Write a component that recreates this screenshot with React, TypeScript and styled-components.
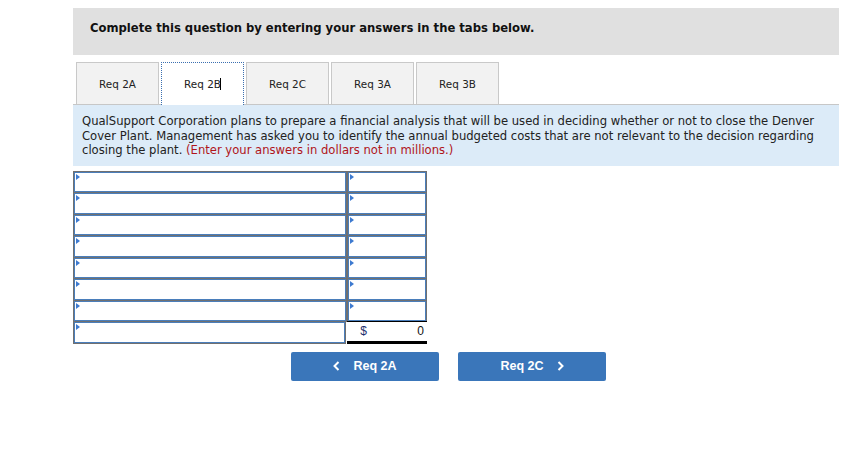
import styled, { createGlobalStyle } from 'styled-components';

const Global = createGlobalStyle`
  body {
    margin: 0;
    background: #ffffff;
    font-family: "DejaVu Sans", Verdana, sans-serif;
  }
`;

const Page = styled.div`
  width: 766px;
  padding: 8px 0 0 73px;
`;

const Banner = styled.div`
  background: #e0e0e0;
  height: 47px;
  display: flex;
  align-items: center;
  padding: 0 17px 8px;
  box-sizing: border-box;
  font-weight: bold;
  font-size: 11.6px;
  color: #111;
`;

const TabBar = styled.div`
  display: flex;
  gap: 2px;
  margin-top: 7px;
  padding-left: 3px;
  border-bottom: 1px solid #c7c7c7;
`;

const Tab = styled.div<{ active?: boolean }>`
  width: 83px;
  height: 42px;
  box-sizing: border-box;
  display: flex;
  align-items: center;
  justify-content: center;
  font-size: 10.4px;
  color: #222;
  background: ${(p) => (p.active ? '#ffffff' : '#f2f2f2')};
  border: ${(p) => (p.active ? '1px dotted #3a6fb0' : '1px solid #c9c9c9')};
  border-bottom: none;
  margin-bottom: -1px;
  ${(p) => (p.active ? 'height: 43px;' : '')}
`;

const Caret = styled.span`
  display: inline-block;
  width: 1px;
  height: 12px;
  background: #000;
  margin-left: -1px;
`;

const Prompt = styled.div`
  background: #dcebf8;
  padding: 9px 9px 8px;
  font-family: "DejaVu Sans Condensed", "DejaVu Sans", sans-serif;
  font-stretch: condensed;
  font-size: 12.9px;
  line-height: 14.5px;
  white-space: nowrap;
  color: #222;
`;

const Note = styled.span`
  color: #b0151b;
`;

const Sheet = styled.div`
  margin-top: 5px;
  width: 354px;
  display: flex;
  flex-direction: column;
`;

const Row = styled.div`
  display: flex;
  & + & {
    margin-top: -1px;
  }
`;

const Cell = styled.div<{ wide?: boolean; total?: boolean }>`
  position: relative;
  box-sizing: border-box;
  height: 22.5px;
  width: ${(p) => (p.wide ? '274px' : '80px')};
  border: 1px solid #707070;
  box-shadow: inset 0 0 0 1px #4a7ebb;
  background: #fff;
  display: flex;
  align-items: center;
  justify-content: space-between;
  padding: 0 3px 0 13px;
  font-family: "Liberation Sans", Arial, sans-serif;
  font-size: 12px;
  color: #111;
  ${(p) =>
    p.total
      ? `border: none; box-shadow: none; border-top: 1px solid #000; border-bottom: 3px solid #000; margin-left: 1px;`
      : ''}
`;

const Marker = styled.span`
  position: absolute;
  left: 2px;
  top: 2px;
  width: 0;
  height: 0;
  border-top: 3px solid transparent;
  border-bottom: 3px solid transparent;
  border-left: 4px solid #3d7ad0;
`;

const Dollar = styled.span`
  color: #1d2f6e;
`;

const Nav = styled.div`
  display: flex;
  gap: 19px;
  margin: 8px 0 0 218px;
`;

const NavButton = styled.div`
  width: 148px;
  height: 29px;
  background: #3a76ba;
  border-radius: 2px;
  display: flex;
  align-items: center;
  justify-content: center;
  gap: 13px;
  color: #fff;
  font-family: "Liberation Sans", Arial, sans-serif;
  font-weight: bold;
  font-size: 12.5px;
`;

const Chevron = ({ dir }: { dir: 'left' | 'right' }) => (
  <svg width="7" height="10" viewBox="0 0 7 10">
    <path
      d={dir === 'left' ? 'M5.5 1 L1.5 5 L5.5 9' : 'M1.5 1 L5.5 5 L1.5 9'}
      fill="none"
      stroke="#fff"
      strokeWidth="2"
    />
  </svg>
);

const tabs = ['Req 2A', 'Req 2B', 'Req 2C', 'Req 3A', 'Req 3B'];

export default function App() {
  const rows = Array.from({ length: 8 }, (_, i) => i);
  return (
    <>
      <Global />
      <Page>
        <Banner>Complete this question by entering your answers in the tabs below.</Banner>
        <TabBar>
          {tabs.map((t) =>
            t === 'Req 2B' ? (
              <Tab key={t} active>
                {t}
                <Caret />
              </Tab>
            ) : (
              <Tab key={t}>{t}</Tab>
            )
          )}
        </TabBar>
        <Prompt>
          QualSupport Corporation plans to prepare a financial analysis that will be used in deciding whether or not to close the Denver
          <br />
          Cover Plant. Management has asked you to identify the annual budgeted costs that are not relevant to the decision regarding
          <br />
          closing the plant. <Note>(Enter your answers in dollars not in millions.)</Note>
        </Prompt>
        <Sheet>
          {rows.map((i) => (
            <Row key={i}>
              <Cell wide>
                <Marker />
              </Cell>
              {i === 7 ? (
                <Cell total>
                  <Dollar>$</Dollar>
                  <span>0</span>
                </Cell>
              ) : (
                <Cell>
                  <Marker />
                </Cell>
              )}
            </Row>
          ))}
        </Sheet>
        <Nav>
          <NavButton>
            <Chevron dir="left" />
            Req 2A
          </NavButton>
          <NavButton>
            Req 2C
            <Chevron dir="right" />
          </NavButton>
        </Nav>
      </Page>
    </>
  );
}
